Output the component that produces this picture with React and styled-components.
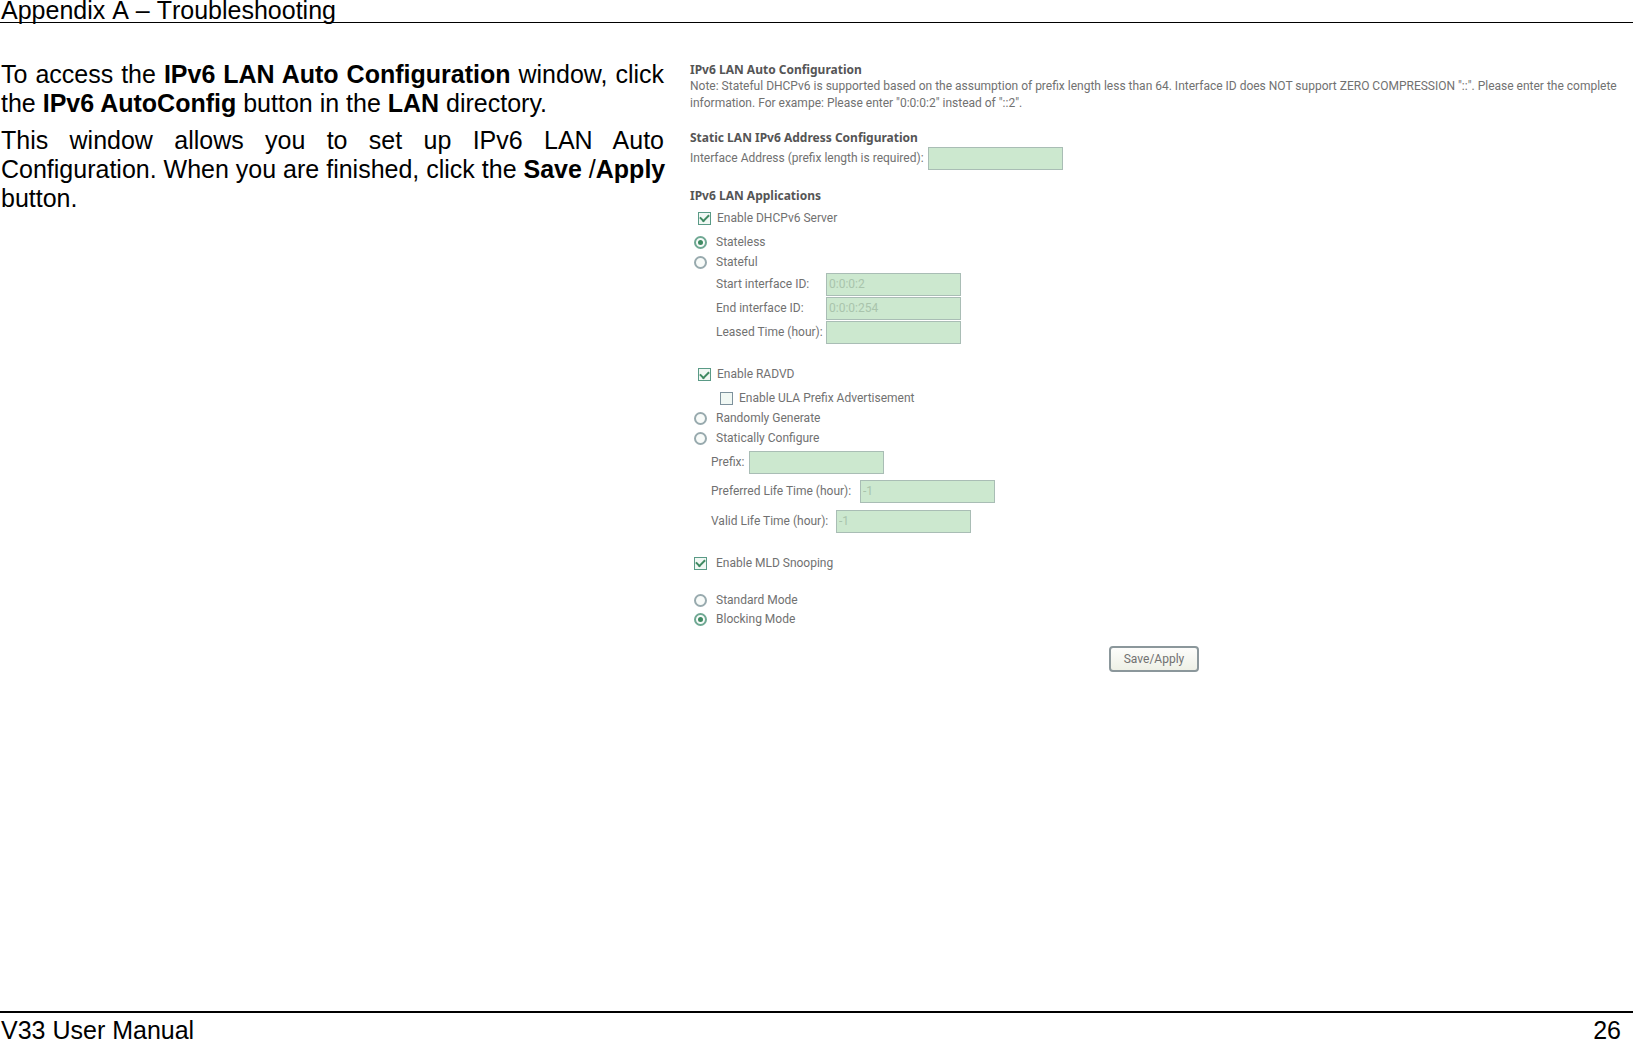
import { useState } from 'react'
import styled, { createGlobalStyle } from 'styled-components'

const App = () => {
  const [form, setForm] = useState({
    address: '',
    dhcp: true,
    dhcpMode: 'stateless',
    startId: '0:0:0:2',
    endId: '0:0:0:254',
    leasedTime: '',
    radvd: true,
    ula: false,
    ulaMode: '',
    prefix: '',
    preferredLife: '-1',
    validLife: '-1',
    mld: true,
    mldMode: 'blocking',
  })

  const onChange = (e) => {
    const { name, type, checked, value } = e.target
    setForm((prev) => ({
      ...prev,
      [name]: type === 'checkbox' ? checked : value,
    }))
  }

  const onSubmit = (e) => {
    e.preventDefault()
  }

  const text = (name) => ({
    id: name,
    name,
    type: 'text',
    value: form[name],
    onChange,
  })

  const check = (name) => ({
    name,
    type: 'checkbox',
    checked: form[name],
    onChange,
  })

  const radio = (name, value) => ({
    name,
    type: 'radio',
    value,
    checked: form[name] === value,
    onChange,
  })

  return (
    <Page>
      <GlobalStyle />
      <Header>Appendix A – Troubleshooting</Header>

      <Main>
        <Intro>
          <p>
            To access the <b>IPv6 LAN Auto Configuration</b> window, click the{' '}
            <b>IPv6 AutoConfig</b> button in the <b>LAN</b> directory.
          </p>
          <p>
            This window allows you to set up IPv6 LAN Auto{' '}
            <Line>
              Configuration. When you are finished, click the <b>Save </b>/
              <b>Apply</b>
            </Line>{' '}
            button.
          </p>
        </Intro>

        <Panel onSubmit={onSubmit}>
          <Section>
            <Title>IPv6 LAN Auto Configuration</Title>
            <Note>
              Note: Stateful DHCPv6 is supported based on the assumption of
              prefix length less than 64. Interface ID does NOT support ZERO
              COMPRESSION "::". Please enter the complete information. For
              exampe: Please enter "0:0:0:2" instead of "::2".
            </Note>
          </Section>

          <Section>
            <Title>Static LAN IPv6 Address Configuration</Title>
            <Field $height={24}>
              <Label htmlFor="address" $width={238}>
                Interface Address (prefix length is required):
              </Label>
              <TextInput {...text('address')} />
            </Field>
          </Section>

          <Section>
            <Title>IPv6 LAN Applications</Title>
            <Option $indent={8} $height={28}>
              <Checkbox {...check('dhcp')} />
              Enable DHCPv6 Server
            </Option>
            <Option $indent={4} $gap={9}>
              <Radio {...radio('dhcpMode', 'stateless')} />
              Stateless
            </Option>
            <Option $indent={4} $gap={9}>
              <Radio {...radio('dhcpMode', 'stateful')} />
              Stateful
            </Option>
            <Field $indent={26} $height={24}>
              <Label htmlFor="startId" $width={110}>
                Start interface ID:
              </Label>
              <TextInput {...text('startId')} />
            </Field>
            <Field $indent={26} $height={24}>
              <Label htmlFor="endId" $width={110}>
                End interface ID:
              </Label>
              <TextInput {...text('endId')} />
            </Field>
            <Field $indent={26} $height={24}>
              <Label htmlFor="leasedTime" $width={110}>
                Leased Time (hour):
              </Label>
              <TextInput {...text('leasedTime')} />
            </Field>
          </Section>

          <Section>
            <Option $indent={8} $height={27}>
              <Checkbox {...check('radvd')} />
              Enable RADVD
            </Option>
            <Option $indent={30}>
              <Checkbox {...check('ula')} />
              Enable ULA Prefix Advertisement
            </Option>
            <Option $indent={4} $gap={9}>
              <Radio {...radio('ulaMode', 'random')} />
              Randomly Generate
            </Option>
            <Option $indent={4} $gap={9}>
              <Radio {...radio('ulaMode', 'static')} />
              Statically Configure
            </Option>
            <Field $indent={21} $height={28}>
              <Label htmlFor="prefix" $width={38}>
                Prefix:
              </Label>
              <TextInput {...text('prefix')} />
            </Field>
            <Field $indent={21} $height={30}>
              <Label htmlFor="preferredLife" $width={149}>
                Preferred Life Time (hour):
              </Label>
              <TextInput {...text('preferredLife')} />
            </Field>
            <Field $indent={21} $height={30}>
              <Label htmlFor="validLife" $width={125}>
                Valid Life Time (hour):
              </Label>
              <TextInput {...text('validLife')} />
            </Field>
          </Section>

          <Section>
            <Option $indent={4} $gap={9}>
              <Checkbox {...check('mld')} />
              Enable MLD Snooping
            </Option>
          </Section>

          <Section>
            <Option $indent={4} $gap={9}>
              <Radio {...radio('mldMode', 'standard')} />
              Standard Mode
            </Option>
            <Option $indent={4} $gap={9} $height={19}>
              <Radio {...radio('mldMode', 'blocking')} />
              Blocking Mode
            </Option>
          </Section>

          <SaveButton type="submit">Save/Apply</SaveButton>
        </Panel>
      </Main>

      <Footer>
        <span>V33 User Manual</span>
        <span>26</span>
      </Footer>
    </Page>
  )
}

export default App

const GlobalStyle = createGlobalStyle`
  * {
    box-sizing: border-box;
  }

  body {
    margin: 0;
    background: #fff;
    color: #000;
    font-family: 'Liberation Sans', Arial, sans-serif;
  }
`

const Page = styled.div`
  display: flex;
  flex-direction: column;
  min-height: 100vh;
  font-size: 25px;
  line-height: 29px;
`

const Header = styled.header`
  height: 23px;
  padding-left: 1px;
  border-bottom: 1px solid #000;
  font-kerning: none;
  line-height: 20px;
`

const Main = styled.main`
  display: grid;
  grid-template-columns: minmax(0, 664fr) minmax(0, 969fr);
  flex: 1;
`

const Intro = styled.section`
  padding: 37px 0 0 1px;
  text-align: justify;

  p {
    margin: 0 0 8px;
  }
`

const Line = styled.span`
  white-space: nowrap;
`

const Panel = styled.form`
  display: flex;
  flex-direction: column;
  gap: 17px;
  padding: 38px 15px 0 26px;
  color: #717171;
  font-family: Roboto, Tahoma, sans-serif;
  font-size: 12px;
  line-height: 17px;
`

const Section = styled.div`
  display: flex;
  flex-direction: column;
`

const Title = styled.h2`
  margin: 0;
  color: #555;
  font-family: 'Noto Sans', Tahoma, sans-serif;
  font-size: 12px;
  font-weight: bold;
`

const Note = styled.p`
  margin: 0;
`

const Field = styled.div`
  display: flex;
  align-items: center;
  height: ${(props) => props.$height}px;
  padding-left: ${(props) => props.$indent || 0}px;
`

const Label = styled.label`
  width: ${(props) => props.$width}px;
  white-space: nowrap;
`

const TextInput = styled.input`
  width: 135px;
  height: 23px;
  padding: 0 2px;
  border: 1px solid #a9bdb5;
  border-radius: 0;
  outline: none;
  background: #cce8cf;
  color: #a9c4ac;
  font: inherit;
`

const Option = styled.label`
  display: flex;
  align-items: center;
  gap: ${(props) => props.$gap || 6}px;
  height: ${(props) => props.$height || 20}px;
  padding-left: ${(props) => props.$indent}px;
`

const Checkbox = styled.input`
  display: grid;
  place-items: center;
  appearance: none;
  width: 13px;
  height: 13px;
  margin: 0;
  border: 1px solid ${(props) => (props.checked ? '#5a9a86' : '#7d919c')};
  background: #f1f8f4;

  &:checked::before {
    content: '';
    width: 7px;
    height: 4px;
    margin-bottom: 2px;
    border: solid #3f8a62;
    border-width: 0 0 2px 2px;
    transform: rotate(-45deg);
  }
`

const Radio = styled.input`
  display: grid;
  place-items: center;
  appearance: none;
  width: 13px;
  height: 13px;
  margin: 0;
  border: 2px solid ${(props) => (props.checked ? '#6fa893' : '#98aaae')};
  border-radius: 50%;
  background: #f8fbf9;

  &:checked::before {
    content: '';
    width: 5px;
    height: 5px;
    border-radius: 50%;
    background: #3f8a62;
  }
`

const SaveButton = styled.button`
  align-self: center;
  width: 90px;
  height: 26px;
  border: 2px solid #8b979b;
  border-radius: 4px;
  background: linear-gradient(#fdfdfb, #eef0e6);
  color: #717171;
  font: inherit;
  line-height: 20px;
  cursor: pointer;
`

const Footer = styled.footer`
  display: flex;
  justify-content: space-between;
  height: 28px;
  padding: 3px 12px 0 1px;
  border-top: 2px solid #000;
  line-height: 29px;
`
